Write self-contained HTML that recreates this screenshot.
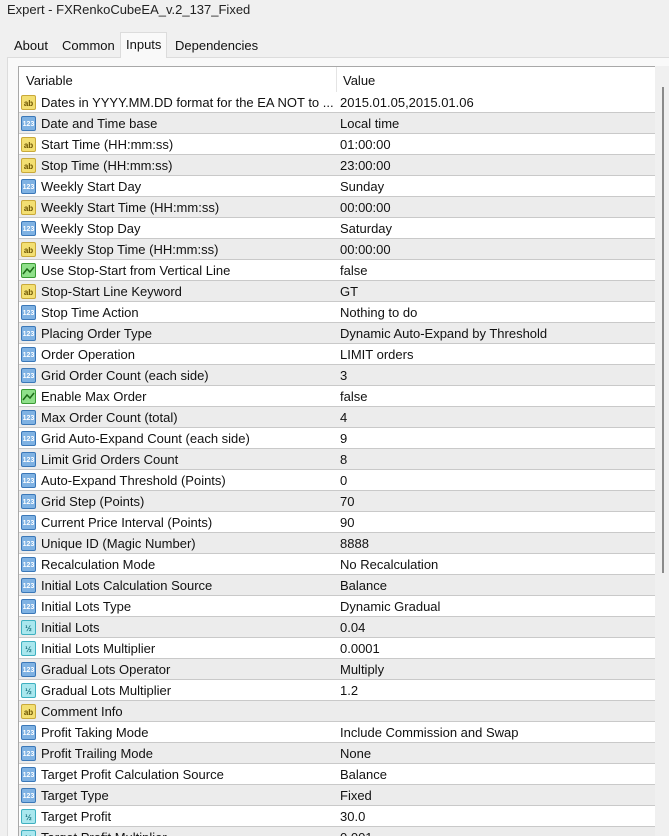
<!DOCTYPE html>
<html><head><meta charset="utf-8">
<style>
*{margin:0;padding:0;box-sizing:border-box}
body{width:669px;height:836px;overflow:hidden;background:#f0f0f0;font-family:"Liberation Sans","Noto Sans CJK SC",sans-serif;font-size:13px;color:#111;position:relative}
.title{position:absolute;left:7px;top:1px;font-size:13px;color:#222}
.tab{position:absolute;top:35px;height:22px;line-height:21px;font-size:13px;padding:0 5px;color:#111}
.tab.act{top:32px;height:26px;background:#f9f9f9;border:1px solid #dcdcdc;border-bottom:none;line-height:24px}
.panel{position:absolute;left:7px;top:57px;width:662px;height:779px;background:#f9f9f9;border-top:1px solid #dcdcdc;border-left:1px solid #dcdcdc}
.tbl{position:absolute;left:18px;top:66px;width:637px;height:770px;background:#fff;border-left:1px solid #a8a8a8;border-top:1px solid #a8a8a8;overflow:hidden}
.hdr{position:absolute;left:0;top:0;width:637px;height:25px;background:#fff;line-height:27px}
.hdr span{position:absolute;top:0}
.sep{position:absolute;left:317px;top:0;width:1px;height:25px;background:#e4e4e4}
.row{position:absolute;left:0;width:637px;height:21px;border-bottom:1px solid #c9c9c9;line-height:22px;white-space:nowrap}
.row.g{background:#ececec}
.row .n{position:absolute;left:22px;top:0}
.row .v{position:absolute;left:321px;top:0}
.ic{position:absolute;left:2px;top:3px;width:15px;height:15px;border-radius:2px;font-size:8px;line-height:15px;text-align:center;font-weight:bold}
.ab{background:#f3df72;border:1px solid #c9a93a;color:#6a5200}
.nu{background:#7fb2e3;border:1px solid #3b78b8;color:#fff;font-size:7px}
.hf{background:#a9e7ee;border:1px solid #3fb0c0;color:#16707c;font-size:8px}
.gr{background:#8fe08a;border:1px solid #3b9a35}
.sb{position:absolute;left:655px;top:66px;width:14px;height:770px;background:#f0f0f0}
.th{position:absolute;left:662px;top:87px;width:2px;height:486px;background:#8a8a8a}
</style></head><body>
<div class="title" style="top:2px">Expert - FXRenkoCubeEA_v.2_137_Fixed</div>
<div class="panel"></div>
<div class="tab" style="left:9px">About</div>
<div class="tab" style="left:57px">Common</div>
<div class="tab act" style="left:120px">Inputs</div>
<div class="tab" style="left:170px">Dependencies</div>
<div class="tbl">
<div class="hdr"><span style="left:7px">Variable</span><div class="sep"></div><span style="left:324px">Value</span></div>
<div id="rows"></div>
</div>
<div class="sb"></div><div class="th"></div>
<script>
var d=[
["ab","Dates in YYYY.MM.DD format for the EA NOT to ...","2015.01.05,2015.01.06"],
["nu","Date and Time base","Local time"],
["ab","Start Time (HH:mm:ss)","01:00:00"],
["ab","Stop Time (HH:mm:ss)","23:00:00"],
["nu","Weekly Start Day","Sunday"],
["ab","Weekly Start Time (HH:mm:ss)","00:00:00"],
["nu","Weekly Stop Day","Saturday"],
["ab","Weekly Stop Time (HH:mm:ss)","00:00:00"],
["gr","Use Stop-Start from Vertical Line","false"],
["ab","Stop-Start Line Keyword","GT"],
["nu","Stop Time Action","Nothing to do"],
["nu","Placing Order Type","Dynamic Auto-Expand by Threshold"],
["nu","Order Operation","LIMIT orders"],
["nu","Grid Order Count (each side)","3"],
["gr","Enable Max Order","false"],
["nu","Max Order Count (total)","4"],
["nu","Grid Auto-Expand Count (each side)","9"],
["nu","Limit Grid Orders Count","8"],
["nu","Auto-Expand Threshold (Points)","0"],
["nu","Grid Step (Points)","70"],
["nu","Current Price Interval (Points)","90"],
["nu","Unique ID (Magic Number)","8888"],
["nu","Recalculation Mode","No Recalculation"],
["nu","Initial Lots Calculation Source","Balance"],
["nu","Initial Lots Type","Dynamic Gradual"],
["hf","Initial Lots","0.04"],
["hf","Initial Lots Multiplier","0.0001"],
["nu","Gradual Lots Operator","Multiply"],
["hf","Gradual Lots Multiplier","1.2"],
["ab","Comment Info",""],
["nu","Profit Taking Mode","Include Commission and Swap"],
["nu","Profit Trailing Mode","None"],
["nu","Target Profit Calculation Source","Balance"],
["nu","Target Type","Fixed"],
["hf","Target Profit","30.0"],
["hf","Target Profit Multiplier","0.001"]];
var h="";
d.forEach(function(r,i){
var t={ab:"ab",nu:"123",hf:"½",gr:'<svg width="13" height="13" viewBox="0 0 13 13"><path d="M1 10 L5 5 L8 8 L12 3" stroke="#1d6b18" stroke-width="1.5" fill="none"/></svg>'}[r[0]];
h+='<div class="row'+(i%2?' g':'')+'" style="top:'+(25+21*i)+'px"><span class="ic '+r[0]+'">'+t+'</span><span class="n">'+r[1]+'</span><span class="v">'+r[2]+'</span></div>';
});
document.getElementById("rows").innerHTML=h;
</script>
</body></html>
